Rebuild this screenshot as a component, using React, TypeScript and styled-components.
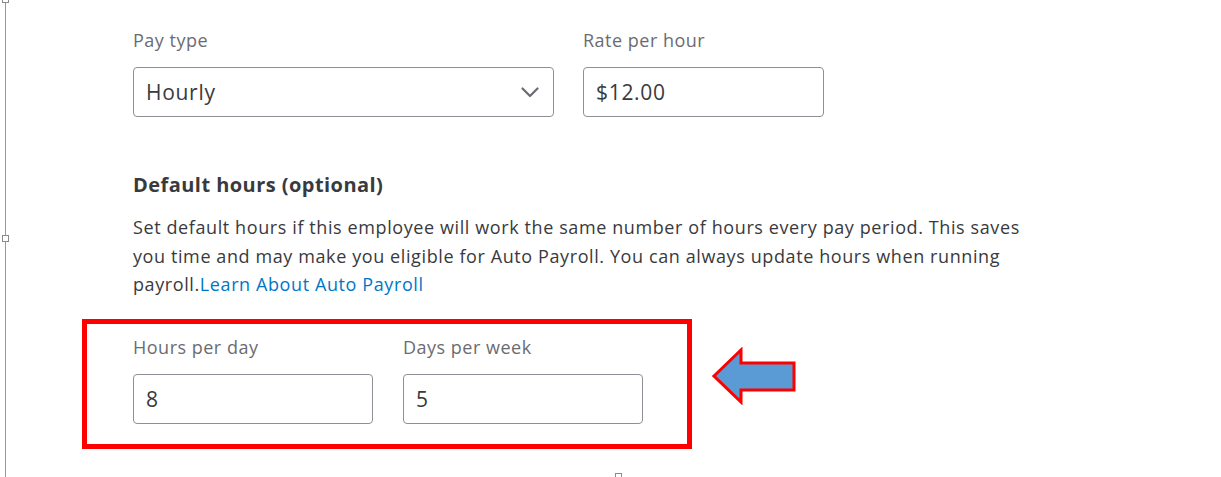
import React from 'react';
import styled, { createGlobalStyle } from 'styled-components';

const GlobalStyle = createGlobalStyle`
  html, body {
    margin: 0;
    padding: 0;
    background: #ffffff;
  }
  body {
    font-family: "Open Sans", "Noto Sans", Arial, sans-serif;
    color: #393a3d;
  }
`;

const Frame = styled.div`
  position: relative;
  width: 1221px;
  height: 477px;
  overflow: hidden;
  box-sizing: border-box;
`;

const FrameLine = styled.div`
  position: absolute;
  left: 5px;
  top: 0;
  bottom: 0;
  width: 1px;
  background: #9a9a9a;
`;

const Handle = styled.div<{ $x: number; $y: number }>`
  position: absolute;
  left: ${(p) => p.$x}px;
  top: ${(p) => p.$y}px;
  width: 5px;
  height: 5px;
  border: 1px solid #8a8a8a;
  background: #ffffff;
`;

const Page = styled.div`
  display: flex;
  flex-direction: column;
  padding: 28px 0 0 133px;
`;

const FieldRow = styled.div<{ $gap: number }>`
  display: flex;
  gap: ${(p) => p.$gap}px;
`;

const Field = styled.div`
  display: flex;
  flex-direction: column;
`;

const Label = styled.label`
  font-size: 18px;
  line-height: 24px;
  letter-spacing: 0.5px;
  color: #6b6c72;
  margin-bottom: 15px;
`;

const Input = styled.div<{ $width: number }>`
  box-sizing: border-box;
  width: ${(p) => p.$width}px;
  height: 50px;
  border: 1px solid #8d9096;
  border-radius: 4px;
  display: flex;
  align-items: center;
  justify-content: space-between;
  padding: 0 14px 0 12px;
  font-size: 21px;
  letter-spacing: 0.7px;
  color: #393a3d;
`;

const Heading = styled.h3`
  margin: 54px 0 0;
  font-size: 20px;
  line-height: 28px;
  font-weight: 700;
  letter-spacing: 0.45px;
  color: #393a3d;
`;

const Text = styled.p`
  margin: 14px 0 0;
  width: 896px;
  font-size: 18px;
  line-height: 28.5px;
  letter-spacing: 0.6px;
  color: #393a3d;
`;

const Link = styled.a`
  color: #0077c5;
  text-decoration: none;
`;

const AnnotationRow = styled.div`
  display: flex;
  align-items: flex-start;
  gap: 20px;
  margin: 20px 0 0 -51px;
`;

const RedBox = styled.div`
  border: 5px solid #ff0000;
  padding: 11px 44px 20px 46px;
`;

const Arrow = styled.svg`
  margin-top: 28px;
  flex-shrink: 0;
`;

const Chevron = () => (
  <svg width="18" height="11" viewBox="0 0 18 11" fill="none">
    <path d="M1.5 1.5 L9 9 L16.5 1.5" stroke="#6b6c72" strokeWidth="2.2" strokeLinecap="round" strokeLinejoin="round" />
  </svg>
);

const App: React.FC = () => {
  return (
    <>
      <GlobalStyle />
      <Frame>
        <FrameLine />
        <Handle $x={2} $y={-4} />
        <Handle $x={2} $y={235} />
        <Handle $x={615} $y={473} />
        <Page>
          <FieldRow $gap={29}>
            <Field>
              <Label>Pay type</Label>
              <Input $width={421}>
                <span>Hourly</span>
                <Chevron />
              </Input>
            </Field>
            <Field>
              <Label>Rate per hour</Label>
              <Input $width={241}>$12.00</Input>
            </Field>
          </FieldRow>

          <Heading>Default hours (optional)</Heading>
          <Text>
            Set default hours if this employee will work the same number of hours every pay period. This saves you
            time and may make you eligible for Auto Payroll. You can always update hours when running
            payroll.<Link href="#">Learn About Auto Payroll</Link>
          </Text>

          <AnnotationRow>
            <RedBox>
              <FieldRow $gap={30}>
                <Field>
                  <Label>Hours per day</Label>
                  <Input $width={240}>8</Input>
                </Field>
                <Field>
                  <Label>Days per week</Label>
                  <Input $width={240}>5</Input>
                </Field>
              </FieldRow>
            </RedBox>
            <Arrow width="86" height="58" viewBox="0 0 86 58">
              <polygon
                points="2,29 29,3 29,16 82,16 82,43 29,43 29,55"
                fill="#5b9bd5"
                stroke="#ff0000"
                strokeWidth="3"
              />
            </Arrow>
          </AnnotationRow>
        </Page>
      </Frame>
    </>
  );
};

export default App;
